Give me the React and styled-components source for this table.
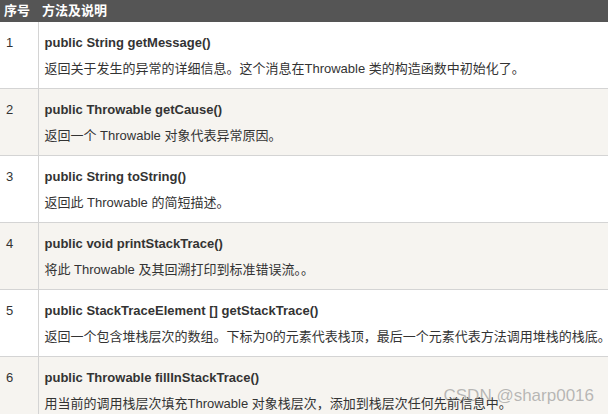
import React from 'react';
import styled, { createGlobalStyle } from 'styled-components';

const Global = createGlobalStyle`
  html, body { margin: 0; padding: 0; background: #fff; }
  body { font-family: "Liberation Sans", Arial, "Noto Sans CJK SC", sans-serif; color: #333; }
`;

const Page = styled.div`
  position: relative;
  width: 608px;
  height: 414px;
  overflow: hidden;
`;

const Table = styled.table`
  width: 640px;
  border-collapse: collapse;
  font-size: 13px;
  table-layout: fixed;
`;

const Head = styled.th`
  background: #555;
  color: #fff;
  font-weight: bold;
  text-align: left;
  height: 22px;
  padding: 0 4px;
  line-height: 22px;
  font-size: 13px;
  width: ${p => p.$w || 'auto'};
  box-sizing: border-box;
`;

const Row = styled.tr`
  background: ${p => (p.$alt ? '#f6f4f0' : '#fff')};
  border-bottom: 1px solid #d4d4d4;
`;

const Cell = styled.td`
  vertical-align: top;
  padding: 11px 6px 9px;
  line-height: 20px;
  border-right: ${p => (p.$first ? '1px solid #d4d4d4' : 'none')};
`;

const Title = styled.div`
  font-weight: bold;
  white-space: nowrap;
`;

const Desc = styled.div`
  margin-top: 6px;
  white-space: nowrap;
`;

const Watermark = styled.div`
  position: absolute;
  right: 14px;
  bottom: 8px;
  font-size: 17px;
  color: rgba(120, 120, 120, 0.5);
  font-family: "Liberation Sans", Arial, sans-serif;
`;

const rows = [
  ['public String getMessage()', '返回关于发生的异常的详细信息。这个消息在Throwable 类的构造函数中初始化了。'],
  ['public Throwable getCause()', '返回一个 Throwable 对象代表异常原因。'],
  ['public String toString()', '返回此 Throwable 的简短描述。'],
  ['public void printStackTrace()', '将此 Throwable 及其回溯打印到标准错误流。。'],
  ['public StackTraceElement [] getStackTrace()', '返回一个包含堆栈层次的数组。下标为0的元素代表栈顶，最后一个元素代表方法调用堆栈的栈底。'],
  ['public Throwable fillInStackTrace()', '用当前的调用栈层次填充Throwable 对象栈层次，添加到栈层次任何先前信息中。'],
];

export default function App() {
  return (
    <Page>
      <Global />
      <Table>
        <thead>
          <tr>
            <Head $w="38px">序号</Head>
            <Head>方法及说明</Head>
          </tr>
        </thead>
        <tbody>
          {rows.map(([t, d], i) => (
            <Row key={i} $alt={i % 2 === 1}>
              <Cell $first>{i + 1}</Cell>
              <Cell>
                <Title>{t}</Title>
                <Desc>{d}</Desc>
              </Cell>
            </Row>
          ))}
        </tbody>
      </Table>
      <Watermark>CSDN @sharp0016</Watermark>
    </Page>
  );
}
